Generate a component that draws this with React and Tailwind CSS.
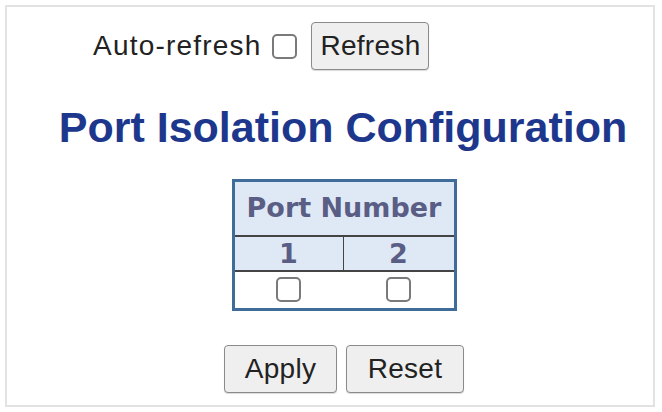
import React, { useState } from 'react';

// Square checkbox drawn with a plain border, like the switch UI's native boxes
function Box({ checked, onChange, className = '' }) {
  return (
    <input
      type="checkbox"
      checked={checked}
      onChange={onChange}
      className={`appearance-none w-[25px] h-[25px] border-2 border-[#7a7a7a] rounded-[5px] bg-white checked:bg-[#0075ff] checked:border-[#0075ff] ${className}`}
    />
  );
}

function Btn({ children, className = '' }) {
  return (
    <button
      className={`h-[48px] border border-[#8a8a8a] rounded-[4px] bg-[#efefef] text-[#222] text-[28px] leading-none tracking-[0.3px] shadow-[0_1px_1px_rgba(0,0,0,0.15)] ${className}`}
    >
      {children}
    </button>
  );
}

export default function App() {
  const [auto, setAuto] = useState(false);
  const [ports, setPorts] = useState([false, false]);

  const toggle = (i) => setPorts(ports.map((v, j) => (j === i ? !v : v)));

  return (
    <div className="w-[662px] h-[412px] bg-white p-[5px] font-['Liberation_Sans',Arial,sans-serif]">
      <div className="w-[650px] h-[402px] border-2 border-[#e2e2e2] flex flex-col">
        {/* refresh bar */}
        <div className="flex items-center pl-[86px] pt-[12px] h-[66px]">
          <span className="text-[28px] text-[#222] tracking-[1.2px]">Auto-refresh</span>
          <Box checked={auto} onChange={() => setAuto(!auto)} className="ml-[11px] mr-[14px] w-[23px] h-[20px]" />
          <Btn className="w-[118px]">Refresh</Btn>
        </div>

        {/* heading */}
        <h1 className="pl-[26px] mt-[33px] text-center text-[43px] leading-none font-bold text-[#1d378d]">
          Port Isolation Configuration
        </h1>

        {/* port table */}
        <div className="pl-[28px] mt-[30px] flex justify-center">
          <table className="border-collapse border-[3px] border-[#3f6c98] font-['DejaVu_Sans',Verdana,sans-serif]">
            <thead>
              <tr>
                <th
                  colSpan={2}
                  className="bg-[#dfe9f6] text-[#5a5e85] text-[27px] font-bold h-[55px] px-[4px] border-b-2 border-[#444]"
                >
                  Port Number
                </th>
              </tr>
              <tr>
                <th className="bg-[#dfe9f6] text-[#5a5e85] text-[27px] font-bold h-[35px] leading-none w-[110px] border-r border-b-2 border-[#444]">
                  1
                </th>
                <th className="bg-[#dfe9f6] text-[#5a5e85] text-[27px] font-bold h-[35px] leading-none w-[112px] border-b-2 border-[#444]">
                  2
                </th>
              </tr>
            </thead>
            <tbody>
              <tr>
                {ports.map((v, i) => (
                  <td key={i} className="h-[39px] text-center align-middle bg-white leading-none">
                    <Box checked={v} onChange={() => toggle(i)} className="align-middle" />
                  </td>
                ))}
              </tr>
            </tbody>
          </table>
        </div>

        {/* actions */}
        <div className="pl-[28px] mt-[34px] flex justify-center gap-[9px]">
          <Btn className="w-[113px]">Apply</Btn>
          <Btn className="w-[118px]">Reset</Btn>
        </div>
      </div>
    </div>
  );
}
